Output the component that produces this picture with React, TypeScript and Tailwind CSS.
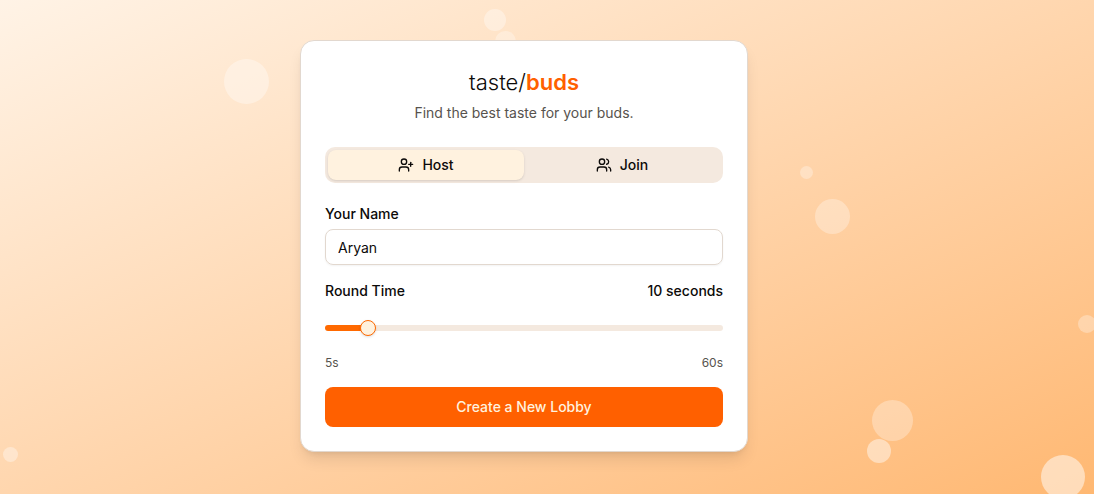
import { useState, type CSSProperties } from "react";
import { UserPlus, Users } from "lucide-react";

const MIN = 5;
const MAX = 60;

const bubbles = [
  "left-[484px] top-[9px] size-[22px] bg-white/35",
  "left-[495px] top-[31px] size-[21px] bg-white/30",
  "left-[224px] top-[59px] size-[45px] bg-white/35",
  "left-[800px] top-[166px] size-[13px] bg-white/30",
  "left-[815px] top-[199px] size-[35px] bg-white/30",
  "left-[1078px] top-[315px] size-[18px] bg-white/30",
  "left-[872px] top-[400px] size-[41px] bg-white/30",
  "left-[867px] top-[439px] size-[24px] bg-white/45",
  "left-[1041px] top-[455px] size-[44px] bg-white/50",
  "left-[3px] top-[447px] size-[15px] bg-white/35",
];

const tabs = [
  { id: "host", label: "Host", Icon: UserPlus },
  { id: "join", label: "Join", Icon: Users },
];

export default function App() {
  const [tab, setTab] = useState("host");
  const [name, setName] = useState("Aryan");
  const [seconds, setSeconds] = useState(10);
  const ratio = (seconds - MIN) / (MAX - MIN);
  const fill = { "--fill": `calc(8px + (100% - 16px) * ${ratio})` } as CSSProperties;

  return (
    <div className="relative flex min-h-screen items-start justify-center overflow-hidden bg-linear-to-br from-[#fff3e6] to-[#ffb872] pt-10 pr-[46px] pb-10 font-['Inter',sans-serif] text-sm text-[#0c0a09]">
      <div aria-hidden="true" className="absolute inset-0">
        {bubbles.map((bubble) => (
          <span key={bubble} className={`absolute rounded-full ${bubble}`} />
        ))}
      </div>
      <main className="relative flex w-full max-w-md flex-col rounded-[14px] border border-[#e2d8cf] bg-white p-6 shadow-lg">
        <header className="flex flex-col gap-1 text-center">
          <h1 className="text-[22px] leading-[34px] font-light">
            taste/<span className="font-semibold text-[#ff6000]">buds</span>
          </h1>
          <p className="text-[#57534e]">Find the best taste for your buds.</p>
        </header>

        <div role="tablist" className="mt-6 grid h-9 grid-cols-2 rounded-[10px] bg-[#f4e9df] p-[3px]">
          {tabs.map(({ id, label, Icon }) => (
            <button
              key={id}
              type="button"
              role="tab"
              aria-selected={tab === id}
              onClick={() => setTab(id)}
              className={`flex items-center justify-center gap-2 rounded-lg font-medium ${
                tab === id ? "bg-[#fff2df] shadow-sm" : ""
              }`}
            >
              <Icon size={16} strokeWidth={2} />
              {label}
            </button>
          ))}
        </div>

        <form className="mt-6 flex flex-col gap-4" onSubmit={(e) => e.preventDefault()}>
          <div className="flex flex-col gap-2">
            <label htmlFor="name" className="leading-[14px] font-medium">
              Your Name
            </label>
            <input
              id="name"
              value={name}
              onChange={(e) => setName(e.target.value)}
              className="h-9 w-full rounded-lg border border-[#e2d8cf] px-3 shadow-xs outline-none"
            />
          </div>
          <div className="flex flex-col">
            <div className="flex justify-between font-medium">
              <label htmlFor="time">Round Time</label>
              <output htmlFor="time">{seconds} seconds</output>
            </div>
            <input
              id="time"
              type="range"
              min={MIN}
              max={MAX}
              value={seconds}
              onChange={(e) => setSeconds(Number(e.target.value))}
              style={fill}
              className="my-[19px] h-4 w-full appearance-none bg-transparent outline-none [&::-webkit-slider-runnable-track]:h-1.5 [&::-webkit-slider-runnable-track]:rounded-full [&::-webkit-slider-runnable-track]:bg-[linear-gradient(to_right,#ff6900_var(--fill),#f4e9df_var(--fill))] [&::-webkit-slider-thumb]:-mt-[5px] [&::-webkit-slider-thumb]:size-4 [&::-webkit-slider-thumb]:appearance-none [&::-webkit-slider-thumb]:rounded-full [&::-webkit-slider-thumb]:border [&::-webkit-slider-thumb]:border-[#ff6900] [&::-webkit-slider-thumb]:bg-[#fff2df] [&::-webkit-slider-thumb]:shadow-sm"
            />
            <div className="flex justify-between text-xs text-[#57534e]">
              <span>{MIN}s</span>
              <span>{MAX}s</span>
            </div>
          </div>
          <button type="submit" className="h-10 rounded-lg bg-[#ff6000] font-medium text-[#fff2df]">
            Create a New Lobby
          </button>
        </form>
      </main>
    </div>
  );
}
